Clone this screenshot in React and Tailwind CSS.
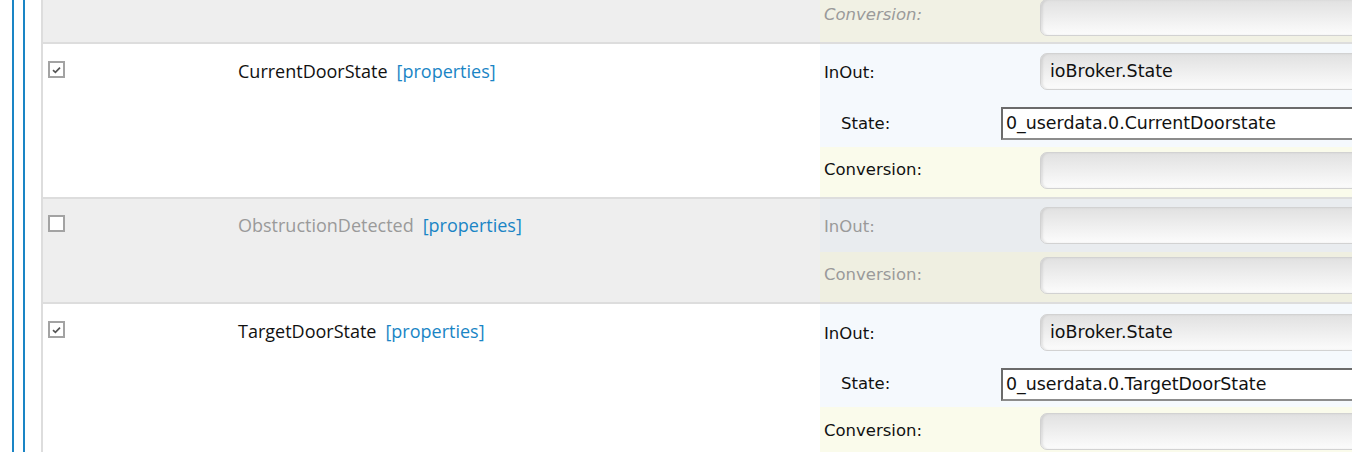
import React from "react";

const leftFont = { fontFamily: '"Open Sans", "Noto Sans", sans-serif' };
const rightFont = { fontFamily: '"DejaVu Sans", "Liberation Sans", sans-serif' };

const Checkbox = ({ checked }) => (
  <div className="w-[17px] h-[17px] border-2 border-[#a3a3a3] bg-white flex items-center justify-center shrink-0">
    {checked && (
      <svg width="9" height="8" viewBox="0 0 9 8">
        <path d="M1 4.2 L3.4 6.4 L8 1.6" fill="none" stroke="#555" strokeWidth="1.7" />
      </svg>
    )}
  </div>
);

const SelectBox = ({ value, top }) => (
  <div
    className={`${top} w-[400px] h-[37px] shrink-0 rounded-[7px] border border-[#d2d2d2] bg-linear-to-b from-[#e1e1e1] to-[#fcfcfc] shadow-[inset_2px_0_2px_rgba(0,0,0,0.08)] flex items-center pl-[9px] text-[17.5px] text-[#111]`}
  >
    {value}
  </div>
);

// label column + select field
const SubRow = ({ label, h, bg, dim, italic, lp, top, value }) => (
  <div className={`flex items-start shrink-0 ${h} ${bg}`}>
    <div
      className={`w-[216px] ml-[4px] shrink-0 whitespace-nowrap text-[16.5px] leading-[24px] ${lp} ${
        dim ? "text-[#9a9a9a]" : "text-[#111]"
      } ${italic ? "italic" : ""}`}
    >
      {label}
    </div>
    <SelectBox value={value} top={top} />
  </div>
);

const StateRow = ({ value, lp, top }) => (
  <div className="flex items-start shrink-0 h-[50px] bg-[#f5f9fd]">
    <div className={`ml-[21px] ${lp} leading-[24px] text-[16.5px] text-[#111] w-[160px] shrink-0`}>
      State:
    </div>
    <div
      className={`${top} w-[400px] h-[33px] shrink-0 border-2 border-[#8c8c8c] border-t-[#6b6b6b] border-l-[#6b6b6b] bg-white flex items-center pl-[3px] text-[17.4px] text-[#111]`}
    >
      {value}
    </div>
  </div>
);

const Characteristic = ({ name, checked, rowH, bg, textTop, children }) => (
  <div className={`flex shrink-0 ${rowH} border-b-2 border-[#dddddd] ${bg}`}>
    <div className={`w-[777px] shrink-0 flex items-start ${textTop}`} style={leftFont}>
      <div className="ml-[5px] mt-[2px]">
        <Checkbox checked={checked} />
      </div>
      <div className="ml-[173px] text-[18px] leading-[24px] whitespace-nowrap">
        <span className={checked ? "text-[#111]" : "text-[#9a9a9a]"}>{name}</span>
        <span className="ml-[9px] text-[#1a85c5]">[properties]</span>
      </div>
    </div>
    <div className="flex-1 flex flex-col overflow-hidden" style={rightFont}>
      {children}
    </div>
  </div>
);

export default function App() {
  return (
    <div className="w-full h-[452px] overflow-hidden bg-white flex">
      {/* tree lines */}
      <div className="w-[43px] shrink-0 flex h-full">
        <div className="ml-[12px] w-[2px] h-full bg-[#1a85c5]" />
        <div className="ml-[9px] w-[2px] h-full bg-[#1a85c5]" />
        <div className="ml-[16px] w-[2px] h-full bg-[#dddddd]" />
      </div>

      <div className="flex-1 flex flex-col overflow-hidden">
        {/* previous row (cut off) */}
        <div className="flex h-[44px] border-b-2 border-[#dddddd] bg-[#eeeeee] shrink-0">
          <div className="w-[777px] shrink-0" />
          <div className="flex-1 flex items-start bg-[#f1f1e4] overflow-hidden" style={rightFont}>
            <div className="ml-[4px] w-[216px] shrink-0 pt-[3px] leading-[24px] text-[16.5px] italic text-[#9a9a9a]">
              Conversion:
            </div>
            <div className="-mt-[1px] w-[400px] h-[37px] shrink-0 rounded-[7px] border border-[#d2d2d2] bg-linear-to-b from-[#e1e1e1] to-[#fcfcfc] shadow-[inset_2px_0_2px_rgba(0,0,0,0.08)]" />
          </div>
        </div>

        <Characteristic name="CurrentDoorState" checked rowH="h-[155px]" bg="bg-white" textTop="pt-[15px]">
          <SubRow label="InOut:" h="h-[53px]" bg="bg-[#f5f9fd]" lp="pt-[17px]" top="mt-[9px]" value="ioBroker.State" />
          <StateRow value="0_userdata.0.CurrentDoorstate" lp="pt-[15px]" top="mt-[10px]" />
          <SubRow label="Conversion:" h="h-[50px]" bg="bg-[#fafbeb]" lp="pt-[11px]" top="mt-[5px]" value="" />
        </Characteristic>

        <Characteristic name="ObstructionDetected" rowH="h-[105px]" bg="bg-[#eeeeee]" textTop="pt-[14px]">
          <SubRow label="InOut:" h="h-[53px]" bg="bg-[#e9ecef]" dim lp="pt-[16px]" top="mt-[8px]" value="" />
          <SubRow label="Conversion:" h="h-[50px]" bg="bg-[#efefe1]" dim lp="pt-[11px]" top="mt-[5px]" value="" />
        </Characteristic>

        <Characteristic name="TargetDoorState" checked rowH="h-[160px]" bg="bg-white" textTop="pt-[15px]">
          <SubRow label="InOut:" h="h-[53px]" bg="bg-[#f5f9fd]" lp="pt-[18px]" top="mt-[10px]" value="ioBroker.State" />
          <StateRow value="0_userdata.0.TargetDoorState" lp="pt-[15px]" top="mt-[11px]" />
          <SubRow label="Conversion:" h="h-[56px]" bg="bg-[#fafbeb]" lp="pt-[12px]" top="mt-[6px]" value="" />
        </Characteristic>
      </div>
    </div>
  );
}
